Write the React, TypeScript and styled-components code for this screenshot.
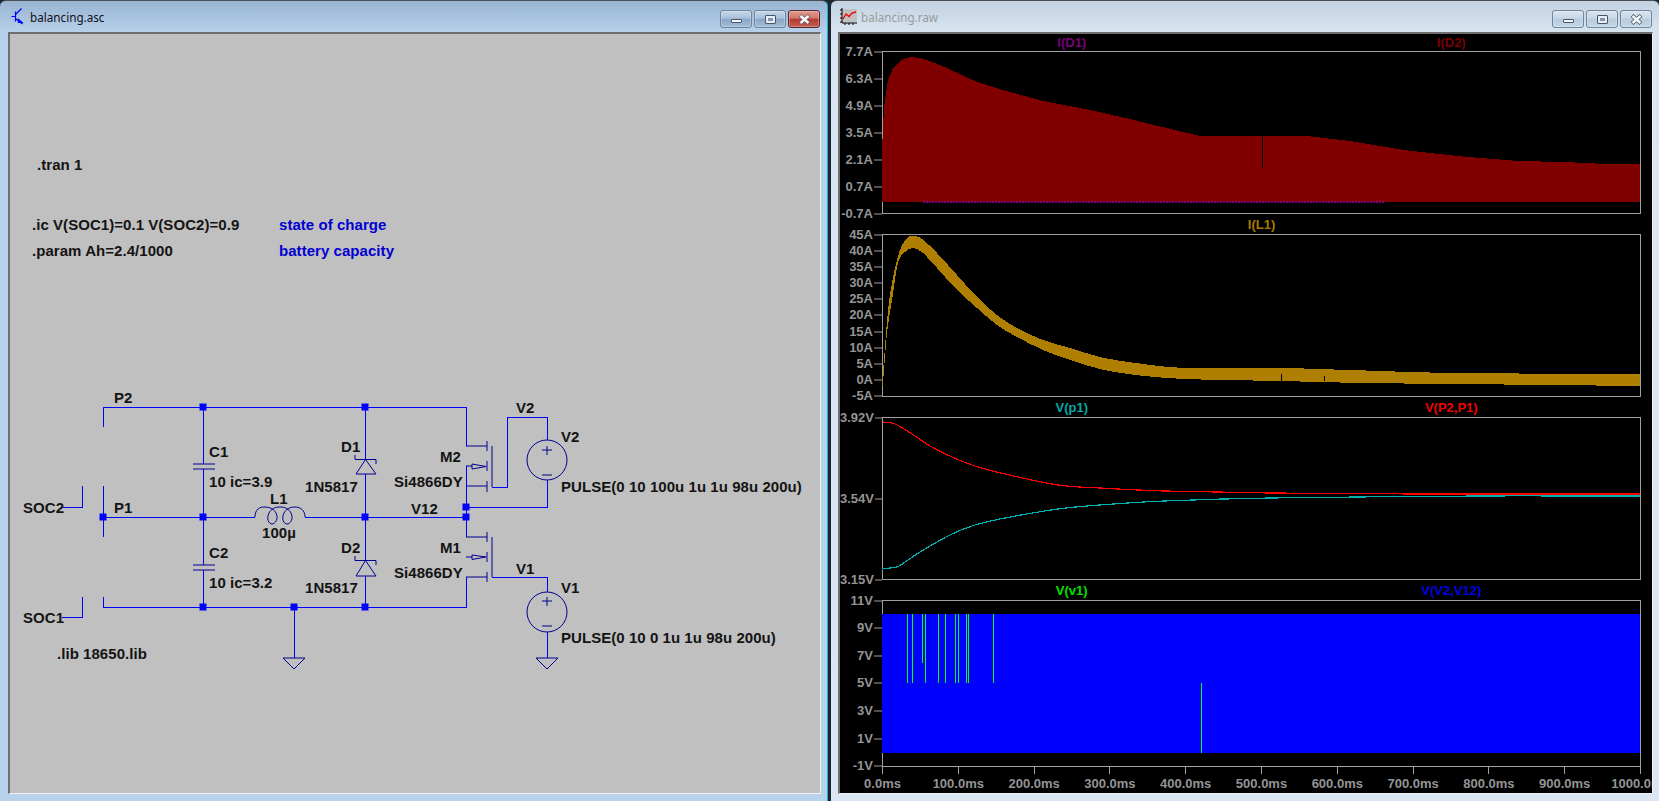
import styled, { createGlobalStyle } from "styled-components";

const GlobalStyle = createGlobalStyle`
    html, body {
        margin: 0;
        padding: 0;
        background: #1b2730;
        overflow: hidden;
    }
`;

const Desktop = styled.div`
    display: flex;
    justify-content: space-between;
    width: 1659px;
    height: 801px;
`;

const Window = styled.div<{ $active?: boolean }>`
    width: 828px;
    height: 801px;
    box-sizing: border-box;
    display: flex;
    flex-direction: column;
    border-radius: 6px 6px 0 0;
    border-top: 1px solid #4a4f55;
    background: ${(p) =>
        p.$active
            ? "linear-gradient(#98b4d2 0, #b8d1ea 32px, #b8d2ec 100%)"
            : "linear-gradient(#c3d2e1 0, #d8e5f1 32px, #dae6f2 100%)"};
    border-right: ${(p) => (p.$active ? "1px solid #10b4d4" : "none")};
`;

const TitleBar = styled.div<{ $active?: boolean }>`
    height: 31px;
    flex: none;
    display: flex;
    align-items: center;
    padding: 0 7px 0 ${(p) => (p.$active ? 11 : 9)}px;
    box-sizing: border-box;
    gap: ${(p) => (p.$active ? 6 : 4)}px;
    font: 11.7px "Noto Sans", sans-serif;
    color: ${(p) => (p.$active ? "#10101a" : "#9a9a9a")};
`;

const TitleText = styled.span`
    flex: 1;
    padding-top: 1px;
`;

const WinButtons = styled.div`
    display: flex;
    gap: 2px;
    align-self: flex-start;
    margin-top: 9px;
`;

const WinButton = styled.div<{ $close?: boolean; $active?: boolean }>`
    width: 32px;
    height: 18px;
    box-sizing: border-box;
    border-radius: 3px;
    display: flex;
    align-items: center;
    justify-content: center;
    border: 1px solid ${(p) => (p.$close && p.$active ? "#5e2230" : "#6d84a0")};
    box-shadow: inset 0 0 0 1px #ffffff40;
    background: ${(p) =>
        p.$close && p.$active
            ? "linear-gradient(#dc9a90 0, #cf7a6c 45%, #b5392c 50%, #c4604e 100%)"
            : p.$active
              ? "linear-gradient(#c6d6e8 0, #a9c0da 45%, #8aa6c6 50%, #a3bbd6 100%)"
              : "linear-gradient(#d8e3ee 0, #c9d7e6 45%, #b8cadc 50%, #c6d6e6 100%)"};
`;

const MinGlyph = styled.div`
    width: 11px;
    height: 4px;
    margin-top: 4px;
    box-sizing: border-box;
    background: #f4f6f8;
    border: 1px solid #45566a;
    border-radius: 1px;
`;

const MaxGlyph = styled.div`
    width: 11px;
    height: 9px;
    box-sizing: border-box;
    background: #e8eef4;
    border: 1px solid #45566a;
    border-radius: 1px;
    display: flex;
    align-items: center;
    justify-content: center;
    &::after {
        content: "";
        width: 5px;
        height: 3px;
        background: #7e94ad;
    }
`;

const SchematicClient = styled.div`
    flex: 1;
    margin: 0 6px 7px 8px;
    box-sizing: border-box;
    background: #c0c0c0;
    border-top: 2px solid #6e6e6e;
    border-left: 2px solid #6e6e6e;
    border-right: 1px solid #f2f2f2;
    border-bottom: 1px solid #f2f2f2;
    min-height: 0;
`;

const SchematicSvg = styled.svg`
    display: block;
    width: 811px;
    height: 759px;
`;

const SchText = styled.text<{ $comment?: boolean }>`
    font: bold 15px "Liberation Sans", Arial, sans-serif;
    letter-spacing: 0.05px;
    fill: ${(p) => (p.$comment ? "#0000d0" : "#141414")};
`;

const PlotClient = styled.div`
    flex: 1;
    margin: 0 6px 7px 7px;
    box-sizing: border-box;
    background: #000;
    border-top: 2px solid #6e6e6e;
    border-left: 2px solid #6e6e6e;
    border-right: 1px solid #f2f2f2;
    border-bottom: 1px solid #f2f2f2;
    min-height: 0;
    overflow: hidden;
    font: bold 13px "Liberation Sans", Arial, sans-serif;
`;

const Pane = styled.section``;

const TraceRow = styled.div<{ $first?: boolean }>`
    height: ${(p) => (p.$first ? 17 : 20)}px;
    margin-left: 42px;
    width: 759px;
    display: flex;
    align-items: center;
`;

const TraceName = styled.span<{ $color: string }>`
    flex: 1;
    text-align: center;
    color: ${(p) => p.$color};
`;

const PaneBody = styled.div`
    display: flex;
`;

const YAxis = styled.div`
    width: 42px;
    flex: none;
    display: flex;
    flex-direction: column;
    justify-content: space-between;
    padding-bottom: 1px;
    box-sizing: border-box;
`;

const YTick = styled.div`
    height: 0;
    display: flex;
    align-items: center;
    justify-content: flex-end;
    color: #949494;
    white-space: nowrap;
    &::after {
        content: "";
        width: 8px;
        height: 1px;
        margin-left: 1px;
        background: #a0a0a0;
        transform: translateY(0.5px);
    }
`;

const Frame = styled.div<{ $height: number }>`
    width: 759px;
    height: ${(p) => p.$height}px;
    box-sizing: border-box;
    border: 1px solid #a0a0a0;
`;

const ChartSvg = styled.svg`
    display: block;
    width: 757px;
    height: 100%;
    overflow: visible;
`;

const XAxis = styled.div`
    margin-left: 42px;
    width: 759px;
    display: flex;
    justify-content: space-between;
`;

const XTick = styled.div`
    width: 1px;
    display: flex;
    flex-direction: column;
    align-items: center;
    color: #949494;
    white-space: nowrap;
    &::before {
        content: "";
        flex: none;
        width: 1px;
        height: 7px;
        background: #a0a0a0;
    }
    span {
        margin-top: 2px;
    }
`;

const wires = [
    "M103 427V407H466V446",
    "M103 486V537",
    "M103 517H255",
    "M305 517H466",
    "M103 597V607H466V577",
    "M62 507H82.5V486",
    "M62 617H82.5V597",
    "M203 407V464",
    "M203 469V565",
    "M203 570V607",
    "M365 407V459",
    "M365 474V560",
    "M365 576V607",
    "M294 607V658",
    "M466 466V537",
    "M466 507H547V480",
    "M492 487H507V417H547V440",
    "M492 577H547V592",
    "M547 632V658",
];

const symbols = [
    // capacitors
    "M193 464H215M193 469H215",
    "M193 565H215M193 570H215",
    // schottky diodes
    "M355 455V459.5H376V464M365.5 459.5L356 474H376Z",
    "M355 556V560.5H376V565M365.5 560.5L356 576H376Z",
    // inductor
    "M255 517C255 509 260 507 264 507C270 507 274 509 276 513C279 519 275 524 272 524C269 524 266 519 269 513C271 509 275 507 280 507C285 507 289 509 291 513C294 519 290 524 287 524C284 524 281 519 284 513C286 509 290 507 295 507C300 507 305 510 305 517",
    // M2
    "M466 446H487M487 441V451M487 461V471M487 481V492M492 446V487M466 486H487",
    "M466 466H472M472 464V469L486 466.5Z",
    // M1
    "M466 537H487M487 532V542M487 552V562M487 572V582M492 537V577M466 577H487",
    "M466 557H472M472 555V559.5L486 557Z",
    // voltage sources
    "M542 450H552M547 446V455M542 475H552",
    "M542 601H552M547 597V606M542 626H552",
    // grounds
    "M283 658H305L294 669Z",
    "M536 658H558L547 669Z",
];

const junctions = [
    [103, 517], [203, 407], [203, 517], [203, 607], [294, 607],
    [365, 407], [365, 517], [365, 607], [466, 507], [466, 517],
];

const labels: [string, number, number, boolean?][] = [
    [".tran 1", 37, 170],
    [".ic V(SOC1)=0.1 V(SOC2)=0.9", 32, 230],
    ["state of charge", 279, 230, true],
    [".param Ah=2.4/1000", 32, 256],
    ["battery capacity", 279, 256, true],
    ["P2", 114, 403],
    ["C1", 209, 457],
    ["10 ic=3.9", 209, 487],
    ["L1", 270, 504],
    ["P1", 114, 513],
    ["SOC2", 23, 513],
    ["100µ", 262, 538],
    ["C2", 209, 558],
    ["10 ic=3.2", 209, 588],
    ["SOC1", 23, 623],
    [".lib 18650.lib", 57, 659],
    ["D1", 341, 452],
    ["1N5817", 305, 492],
    ["M2", 440, 462],
    ["Si4866DY", 394, 487],
    ["V12", 411, 514],
    ["V2", 516, 413],
    ["V2", 561, 442],
    ["PULSE(0 10 100u 1u 1u 98u 200u)", 561, 492],
    ["D2", 341, 553],
    ["1N5817", 305, 593],
    ["M1", 440, 553],
    ["Si4866DY", 394, 578],
    ["V1", 516, 574],
    ["V1", 561, 593],
    ["PULSE(0 10 0 1u 1u 98u 200u)", 561, 643],
];

// catmull-rom through the read off points, curves in the plots are not straight pieces
function smooth(points: number[][], start = "M") {
    let d = `${start}${points[0][0]} ${points[0][1]}`;
    for (let i = 0; i < points.length - 1; i++) {
        const p0 = points[Math.max(i - 1, 0)];
        const p1 = points[i];
        const p2 = points[i + 1];
        const p3 = points[Math.min(i + 2, points.length - 1)];
        d += `C${p1[0] + (p2[0] - p0[0]) / 6} ${p1[1] + (p2[1] - p0[1]) / 6} ${p2[0] - (p3[0] - p1[0]) / 6} ${p2[1] - (p3[1] - p1[1]) / 6} ${p2[0]} ${p2[1]}`;
    }
    return d;
}

// plot data, in window pixels
const diodeTop = "882,202 882,150 884,107 888,80 893,68 900,61 906,58 912,57 920,58 927,60 947,68 977,82 1003,90 1043,101 1090,110 1130,119 1146,123 1175,130 1200,136 1307,136 1350,141 1404,150 1457,156 1518,161 1564,162 1607,164 1640,164 1640,202";
const inductorUpper = [[882, 383], [885, 347], [888, 310], [893, 277], [900, 250], [907, 238], [913, 236], [922, 239], [937, 253], [957, 275], [977, 297], [997, 315], [1017, 328], [1043, 340], [1070, 348], [1100, 357], [1136, 363], [1186, 368], [1279, 368], [1350, 370], [1457, 373], [1640, 374]];
const inductorLower = [[1640, 386], [1457, 384], [1364, 383], [1279, 381], [1186, 379], [1136, 375], [1100, 369], [1070, 360], [1043, 350], [1017, 337], [997, 325], [977, 308], [957, 290], [937, 268], [923, 253], [913, 248], [905, 252], [898, 263], [892, 300], [887, 333], [884, 370], [882, 392]];
const voltageRed = [[883, 422], [892, 423], [899, 426], [915, 436], [930, 446], [952, 457], [975, 466], [1005, 474], [1058, 485], [1100, 488], [1164, 491], [1270, 493], [1417, 494], [1640, 494]];
const voltageCyan = [[882, 569], [890, 568], [899, 566], [920, 552], [952, 534], [975, 525], [1005, 518], [1058, 509], [1100, 505], [1164, 501], [1270, 498], [1481, 496], [1640, 496]];
const greenSpikes = [907, 912, 925, 938, 945, 955, 958, 966, 968, 993];

const xLabels = ["0.0ms", "100.0ms", "200.0ms", "300.0ms", "400.0ms", "500.0ms", "600.0ms", "700.0ms", "800.0ms", "900.0ms", "1000.0ms"];

const panes = [
    {
        top: 51, height: 163,
        traces: [["I(D1)", "#7a007a"], ["I(D2)", "#7a0000"]],
        ticks: ["7.7A", "6.3A", "4.9A", "3.5A", "2.1A", "0.7A", "-0.7A"],
        plot: (
            <>
                <rect x="882" y="141" width="1" height="17" fill="#800080" />
                <polygon points={diodeTop} fill="#800000" />
                <line x1="923" y1="202" x2="1385" y2="202" stroke="#800080" strokeWidth="2" strokeDasharray="2 1" />
                <line x1="1262.5" y1="136" x2="1262.5" y2="168" stroke="#000" />
            </>
        ),
    },
    {
        top: 234, height: 163,
        traces: [["I(L1)", "#a87a00"]],
        ticks: ["45A", "40A", "35A", "30A", "25A", "20A", "15A", "10A", "5A", "0A", "-5A"],
        plot: (
            <>
                <path d={`${smooth(inductorUpper)}${smooth(inductorLower, "L")}Z`} fill="#ae7f00" />
                <line x1="1281.5" y1="374" x2="1281.5" y2="381" stroke="#000" />
                <line x1="1324.5" y1="376" x2="1324.5" y2="381" stroke="#000" />
            </>
        ),
    },
    {
        top: 417, height: 163,
        traces: [["V(p1)", "#00a8a8"], ["V(P2,P1)", "#f00000"]],
        ticks: ["3.92V", "3.54V", "3.15V"],
        plot: (
            <>
                <path d={smooth(voltageCyan)} fill="none" stroke="#00b0b0" strokeWidth="1.2" />
                <path d={smooth(voltageRed)} fill="none" stroke="#ff0000" strokeWidth="1.2" />
            </>
        ),
    },
    {
        top: 600, height: 167,
        traces: [["V(v1)", "#00e000"], ["V(V2,V12)", "#0000e0"]],
        ticks: ["11V", "9V", "7V", "5V", "3V", "1V", "-1V"],
        plot: (
            <>
                <rect x="882" y="614" width="758" height="139" fill="#0000ff" />
                {greenSpikes.map((x) => (
                    <line key={x} x1={x + 0.5} y1="614" x2={x + 0.5} y2="683" stroke="#00ff00" />
                ))}
                <line x1="922.5" y1="614" x2="922.5" y2="663" stroke="#00ff00" />
                <line x1="1201.5" y1="683" x2="1201.5" y2="753" stroke="#00ff00" />
            </>
        ),
    },
];

function SchematicIcon() {
    return (
        <svg width="13" height="17" viewBox="0 0 13 17" fill="none" stroke="#0000ff" strokeWidth="1.2">
            <path d="M0.5 8.5H4.5M4.5 3.5V13.5M4.5 6.5L10.5 0.5M4.5 10.5L11.5 16" />
            <path d="M7.5 11.5L11 14.5L7.5 14.5Z" fill="#0000ff" />
        </svg>
    );
}

function WaveIcon() {
    return (
        <svg width="17" height="17" viewBox="0 0 17 17" fill="none">
            <rect x="2" y="1" width="15" height="13" fill="#c0c0c0" />
            <path d="M2 0V15H17M0 2H2M0 6H2M0 10H2M0 14H2M5 15V17M9 15V17M13 15V17" stroke="#000" />
            <path d="M3 11L6 6L9 8.5L12 5L16 4" stroke="#f00000" strokeWidth="1.3" />
        </svg>
    );
}

function CloseGlyph({ active }: { active: boolean }) {
    return (
        <svg width="13" height="11" viewBox="0 0 13 11">
            <path d="M2 1.5L11 9.5M11 1.5L2 9.5" stroke="#45566a" strokeWidth="4" opacity={active ? 0.6 : 1} />
            <path d="M2.5 2L10.5 9M10.5 2L2.5 9" stroke="#f6f8fa" strokeWidth="2.4" />
        </svg>
    );
}

function WindowButtons({ active }: { active: boolean }) {
    return (
        <WinButtons>
            <WinButton $active={active}><MinGlyph /></WinButton>
            <WinButton $active={active}><MaxGlyph /></WinButton>
            <WinButton $active={active} $close><CloseGlyph active={active} /></WinButton>
        </WinButtons>
    );
}

function Schematic() {
    return (
        <SchematicSvg viewBox="10 34 811 759">
            <g stroke="#0000ff" fill="none" shapeRendering="crispEdges">
                {wires.map((d) => <path key={d} d={d} />)}
            </g>
            <g stroke="#000090" fill="none">
                {symbols.map((d) => <path key={d} d={d} />)}
                <circle cx="547" cy="460" r="20" />
                <circle cx="547" cy="612" r="20" />
            </g>
            {junctions.map(([x, y]) => (
                <rect key={`${x}-${y}`} x={x - 3.5} y={y - 3.5} width="7" height="7" fill="#0000ff" />
            ))}
            {labels.map(([text, x, y, comment]) => (
                <SchText key={`${text}-${x}-${y}`} x={x} y={y} $comment={comment}>{text}</SchText>
            ))}
        </SchematicSvg>
    );
}

function Plots() {
    return (
        <PlotClient>
            {panes.map((pane, i) => (
                <Pane key={pane.top}>
                    <TraceRow $first={i === 0}>
                        {pane.traces.map(([name, color]) => (
                            <TraceName key={name} $color={color}>{name}</TraceName>
                        ))}
                    </TraceRow>
                    <PaneBody>
                        <YAxis>
                            {pane.ticks.map((t) => <YTick key={t}>{t}</YTick>)}
                        </YAxis>
                        <Frame $height={pane.height}>
                            <ChartSvg viewBox={`883 ${pane.top + 1} 757 ${pane.height - 2}`} preserveAspectRatio="none" shapeRendering="crispEdges">
                                {pane.plot}
                            </ChartSvg>
                        </Frame>
                    </PaneBody>
                </Pane>
            ))}
            <XAxis>
                {xLabels.map((t) => (
                    <XTick key={t}><span>{t}</span></XTick>
                ))}
            </XAxis>
        </PlotClient>
    );
}

function App() {
    return (
        <Desktop>
            <GlobalStyle />
            <Window $active>
                <TitleBar $active>
                    <SchematicIcon />
                    <TitleText>balancing.asc</TitleText>
                    <WindowButtons active />
                </TitleBar>
                <SchematicClient>
                    <Schematic />
                </SchematicClient>
            </Window>
            <Window>
                <TitleBar>
                    <WaveIcon />
                    <TitleText>balancing.raw</TitleText>
                    <WindowButtons active={false} />
                </TitleBar>
                <Plots />
            </Window>
        </Desktop>
    );
}

export default App;
